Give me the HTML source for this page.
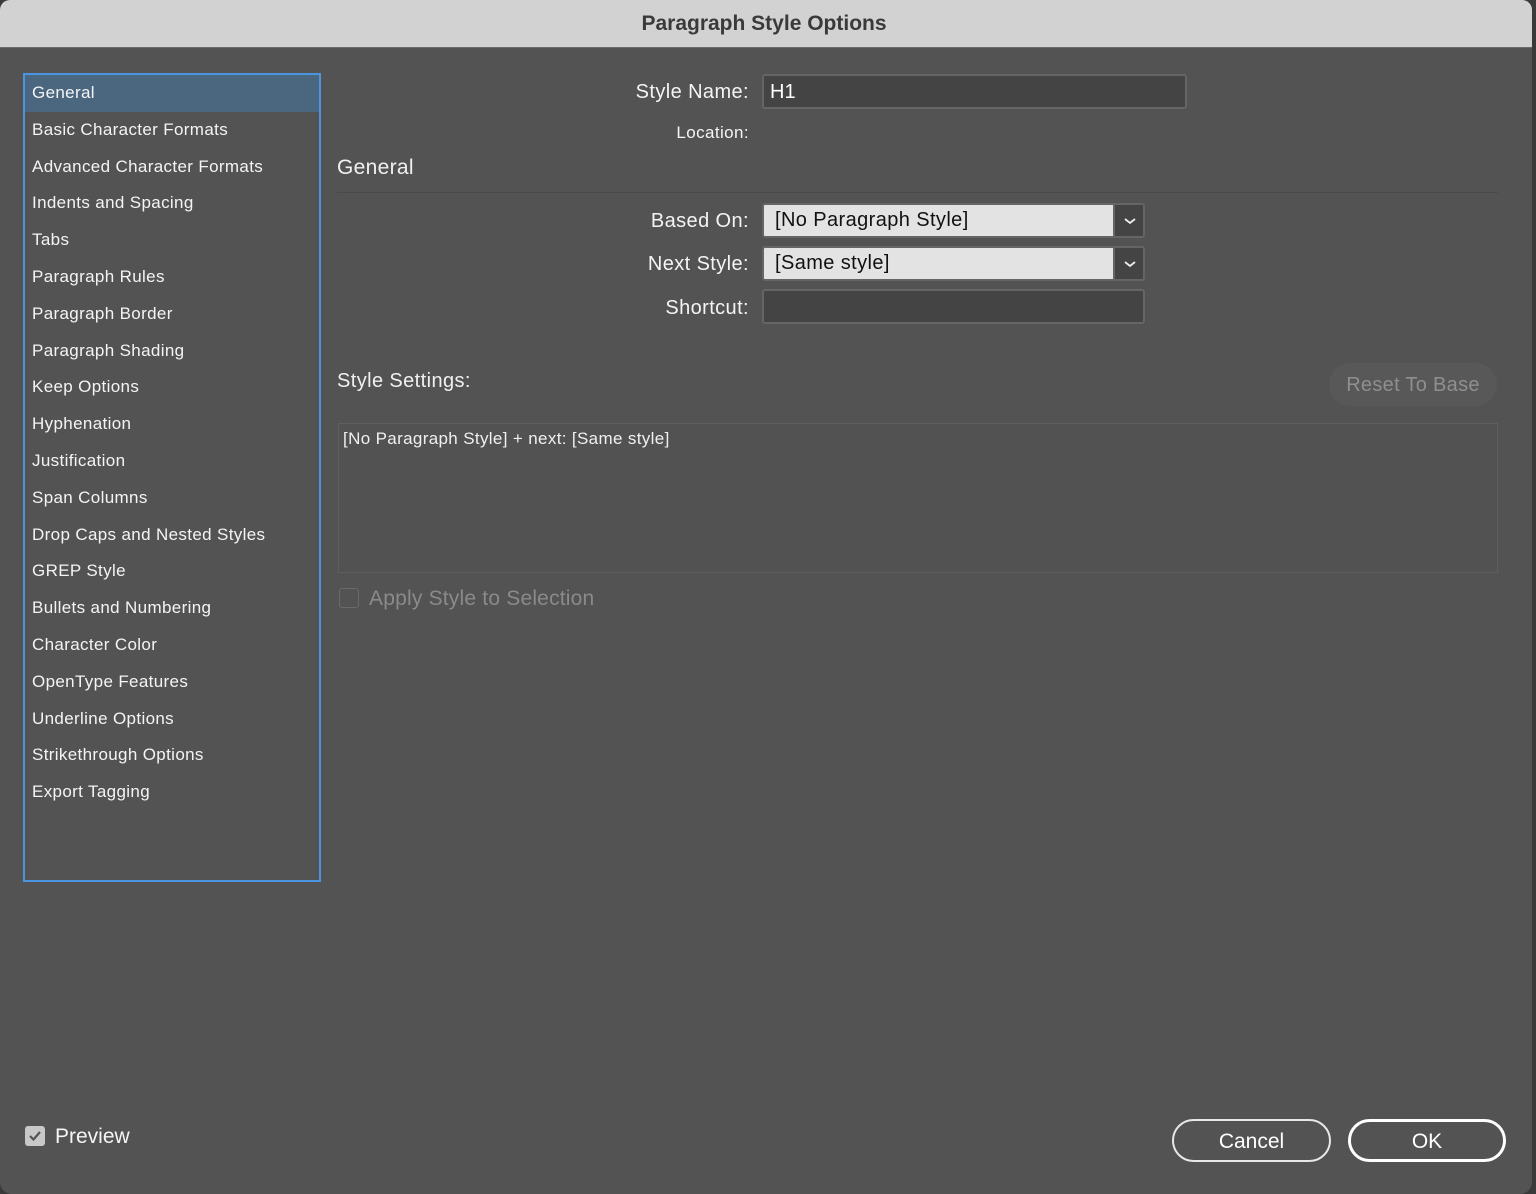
<!DOCTYPE html>
<html><head><meta charset="utf-8"><style>
*{margin:0;padding:0;box-sizing:border-box}
body{width:1536px;height:1194px;background:#3a3a3a;font-family:"Liberation Sans","DejaVu Sans",sans-serif;position:relative;overflow:hidden}
.dlg{position:absolute;left:0;top:0;width:1532px;height:1194px;background:#535353;border-radius:10px 10px 12px 12px;overflow:hidden}
.title{position:absolute;left:0;top:0;width:100%;height:48px;background:#d1d2d1;border-bottom:1px solid #6a6a6a;text-align:center;line-height:48px;font-size:21px;font-weight:bold;color:#3a3a3a;padding-right:4px}
.abs{position:absolute}
.list{position:absolute;left:23px;top:73px;width:298px;height:809px;border:2px solid #4a94e0}
.list div{height:36.8px;line-height:36px;padding-left:7px;color:#f4f4f4;font-size:17px;letter-spacing:0.35px;font-weight:500}
.list .sel{background:#4b6780}
.lbl{position:absolute;color:#f4f4f4;font-size:20px;text-align:right;right:783px;letter-spacing:0.4px;font-weight:500}
.field{position:absolute;background:#444;border:2px solid #656565;border-radius:3px}
.dd{position:absolute;left:762px;width:383px;height:35px;border:2px solid #656565;border-radius:3px;background:#e3e3e3;font-size:20px;color:#111;padding-left:11px;line-height:30px;letter-spacing:0.4px}
.dd .ar{position:absolute;right:0;top:0;width:30px;height:31px;background:#444;border-left:2px solid #666}
.btn{position:absolute;top:1119px;height:43px;border-radius:22px;color:#fff;font-size:21px;text-align:center;line-height:39px}
</style></head><body>
<div class="dlg">
<div class="title">Paragraph Style Options</div>
<div class="list">
<div class="sel">General</div><div>Basic Character Formats</div><div>Advanced Character Formats</div><div>Indents and Spacing</div><div>Tabs</div><div>Paragraph Rules</div><div>Paragraph Border</div><div>Paragraph Shading</div><div>Keep Options</div><div>Hyphenation</div><div>Justification</div><div>Span Columns</div><div>Drop Caps and Nested Styles</div><div>GREP Style</div><div>Bullets and Numbering</div><div>Character Color</div><div>OpenType Features</div><div>Underline Options</div><div>Strikethrough Options</div><div>Export Tagging</div>
</div>
<div class="lbl" style="top:81px">Style Name:</div>
<div class="field" style="left:762px;top:74px;width:425px;height:35px;color:#fff;font-size:20px;padding-left:6px;line-height:33px">H1</div>
<div class="lbl" style="top:123px;font-size:17px">Location:</div>
<div class="abs" style="left:337px;top:156px;font-size:21px;color:#f0f0f0;letter-spacing:0.3px">General</div>
<div class="abs" style="left:337px;top:192px;width:1161px;height:1px;background:#4a4a4a"></div>
<div class="lbl" style="top:210px">Based On:</div>
<div class="dd" style="top:203px">[No Paragraph Style]<div class="ar"><svg width="30" height="31"><path d="M10 14l5 4 5-4" stroke="#eee" stroke-width="1.8" fill="none"/></svg></div></div>
<div class="lbl" style="top:253px">Next Style:</div>
<div class="dd" style="top:246px">[Same style]<div class="ar"><svg width="30" height="31"><path d="M10 14l5 4 5-4" stroke="#eee" stroke-width="1.8" fill="none"/></svg></div></div>
<div class="lbl" style="top:297px">Shortcut:</div>
<div class="field" style="left:762px;top:289px;width:383px;height:35px"></div>
<div class="abs" style="left:337px;top:370px;font-size:20px;color:#f0f0f0;letter-spacing:0.4px">Style Settings:</div>
<div class="abs" style="left:1329px;top:363px;width:168px;height:43px;border-radius:22px;background:#585858;color:#8f8f8f;font-size:20px;text-align:center;line-height:45px;letter-spacing:0.3px">Reset To Base</div>
<div class="abs" style="left:338px;top:423px;width:1160px;height:150px;border:1px solid #5e5e5e;background:#525252;color:#f0f0f0;font-size:17px;padding:5px 0 0 4px;letter-spacing:0.35px">[No Paragraph Style] + next: [Same style]</div>
<div class="abs" style="left:339px;top:588px;width:20px;height:20px;border:1.5px solid #6a6a6a;border-radius:3px"></div>
<div class="abs" style="left:369px;top:587px;font-size:21px;color:#8a8a8a;letter-spacing:0.2px">Apply Style to Selection</div>
<div class="abs" style="left:25px;top:1126px;width:20px;height:20px;background:#c8c8c8;border-radius:3px"><svg width="20" height="20"><path d="M5 10l3.5 3.5L15 6" stroke="#555" stroke-width="2.2" fill="none"/></svg></div>
<div class="abs" style="left:55px;top:1125px;font-size:21px;color:#f5f5f5">Preview</div>
<div class="btn" style="left:1172px;width:159px;border:2px solid #e8e8e8;line-height:41px">Cancel</div>
<div class="btn" style="left:1348px;width:158px;border:3px solid #fff;line-height:39px">OK</div>
</div>
</body></html>
